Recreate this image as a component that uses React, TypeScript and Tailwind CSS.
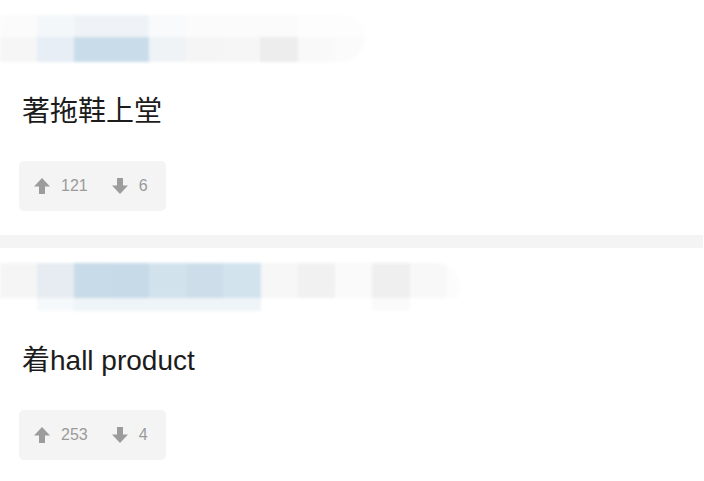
import React from "react";

const ArrowUp = () => (
  <svg width="16" height="16" viewBox="0 0 16 16" fill="#9c9c9c">
    <path d="M8 0 L16 8.5 H11 V16 H5 V8.5 H0 Z" />
  </svg>
);
const ArrowDown = () => (
  <svg width="16" height="16" viewBox="0 0 16 16" fill="#9c9c9c">
    <path d="M5 0 H11 V7.5 H16 L8 16 L0 7.5 H5 Z" />
  </svg>
);

type Row = { h: number; cells: { w: number; c: string }[] };

const Mosaic = ({ rows, wide }: { rows: Row[]; wide?: boolean }) => (
  <div
    className={
      wide
        ? "blur-[1.5px] flex flex-col rounded-r-full overflow-hidden w-[460px]"
        : "blur-[1.5px] flex flex-col rounded-r-full overflow-hidden w-[365px]"
    }
  >
    {rows.map((r, i) => (
      <div key={i} className="flex" style={{ height: r.h }}>
        {r.cells.map((c, j) => (
          <div key={j} style={{ width: c.w, background: c.c }} />
        ))}
      </div>
    ))}
  </div>
);

const mosaic1: Row[] = [
  {
    h: 22,
    cells: [
      { w: 37, c: "#fbfbfb" },
      { w: 37, c: "#f4f7fa" },
      { w: 75, c: "#eff3f7" },
      { w: 37, c: "#f9fafb" },
      { w: 74, c: "#fbfbfb" },
      { w: 38, c: "#fbfbfb" },
      { w: 67, c: "#fdfdfd" },
    ],
  },
  {
    h: 25,
    cells: [
      { w: 37, c: "#f6f6f6" },
      { w: 37, c: "#e7eef5" },
      { w: 75, c: "#c9dce9" },
      { w: 37, c: "#eff3f6" },
      { w: 37, c: "#f5f5f5" },
      { w: 37, c: "#f6f6f6" },
      { w: 38, c: "#ededed" },
      { w: 37, c: "#f9f9f9" },
      { w: 30, c: "#fbfbfb" },
    ],
  },
];

const mosaic2: Row[] = [
  {
    h: 35,
    cells: [
      { w: 37, c: "#f5f5f5" },
      { w: 37, c: "#e6ecf1" },
      { w: 37, c: "#c8dbe8" },
      { w: 38, c: "#c7dae8" },
      { w: 37, c: "#d2e2ed" },
      { w: 37, c: "#cddeea" },
      { w: 38, c: "#d3e3ee" },
      { w: 37, c: "#f7f7f7" },
      { w: 37, c: "#f1f1f1" },
      { w: 37, c: "#fafafa" },
      { w: 38, c: "#efefef" },
      { w: 37, c: "#f8f8f8" },
      { w: 13, c: "#fcfcfc" },
    ],
  },
  {
    h: 13,
    cells: [
      { w: 37, c: "#ffffff" },
      { w: 37, c: "#f6f9fb" },
      { w: 187, c: "#eef4f8" },
      { w: 111, c: "#ffffff" },
      { w: 38, c: "#fafafa" },
      { w: 50, c: "#ffffff" },
    ],
  },
];

const Item = ({
  rows,
  wide,
  text,
  up,
  down,
}: {
  rows: Row[];
  wide?: boolean;
  text: string;
  up: string;
  down: string;
}) => (
  <div className="flex flex-col pt-[15px]">
    <Mosaic rows={rows} wide={wide} />
    <div className="pl-[22px] mt-[32px] text-[28px] leading-[36px] text-[#1c1c1c] font-['Liberation_Sans','Noto_Sans_CJK_SC',sans-serif]">
      {text}
    </div>
    <div className="pl-[19px] mt-[31px]">
      <div className="flex items-center w-[147px] h-[50px] rounded-[5px] bg-[#f4f4f4] pl-[15px] text-[16px] text-[#9a9a9a] font-['Liberation_Sans',sans-serif]">
        <ArrowUp />
        <span className="ml-[11px]">{up}</span>
        <span className="ml-[24px] flex items-center">
          <ArrowDown />
        </span>
        <span className="ml-[11px]">{down}</span>
      </div>
    </div>
  </div>
);

export default function App() {
  return (
    <div className="w-[704px] h-[481px] bg-white overflow-hidden">
      <Item rows={mosaic1} text="著拖鞋上堂" up="121" down="6" />
      <div className="mt-[24px] h-[13px] w-[703px] bg-[#f4f4f4]" />
      <Item rows={mosaic2} wide text="着hall product" up="253" down="4" />
    </div>
  );
}
